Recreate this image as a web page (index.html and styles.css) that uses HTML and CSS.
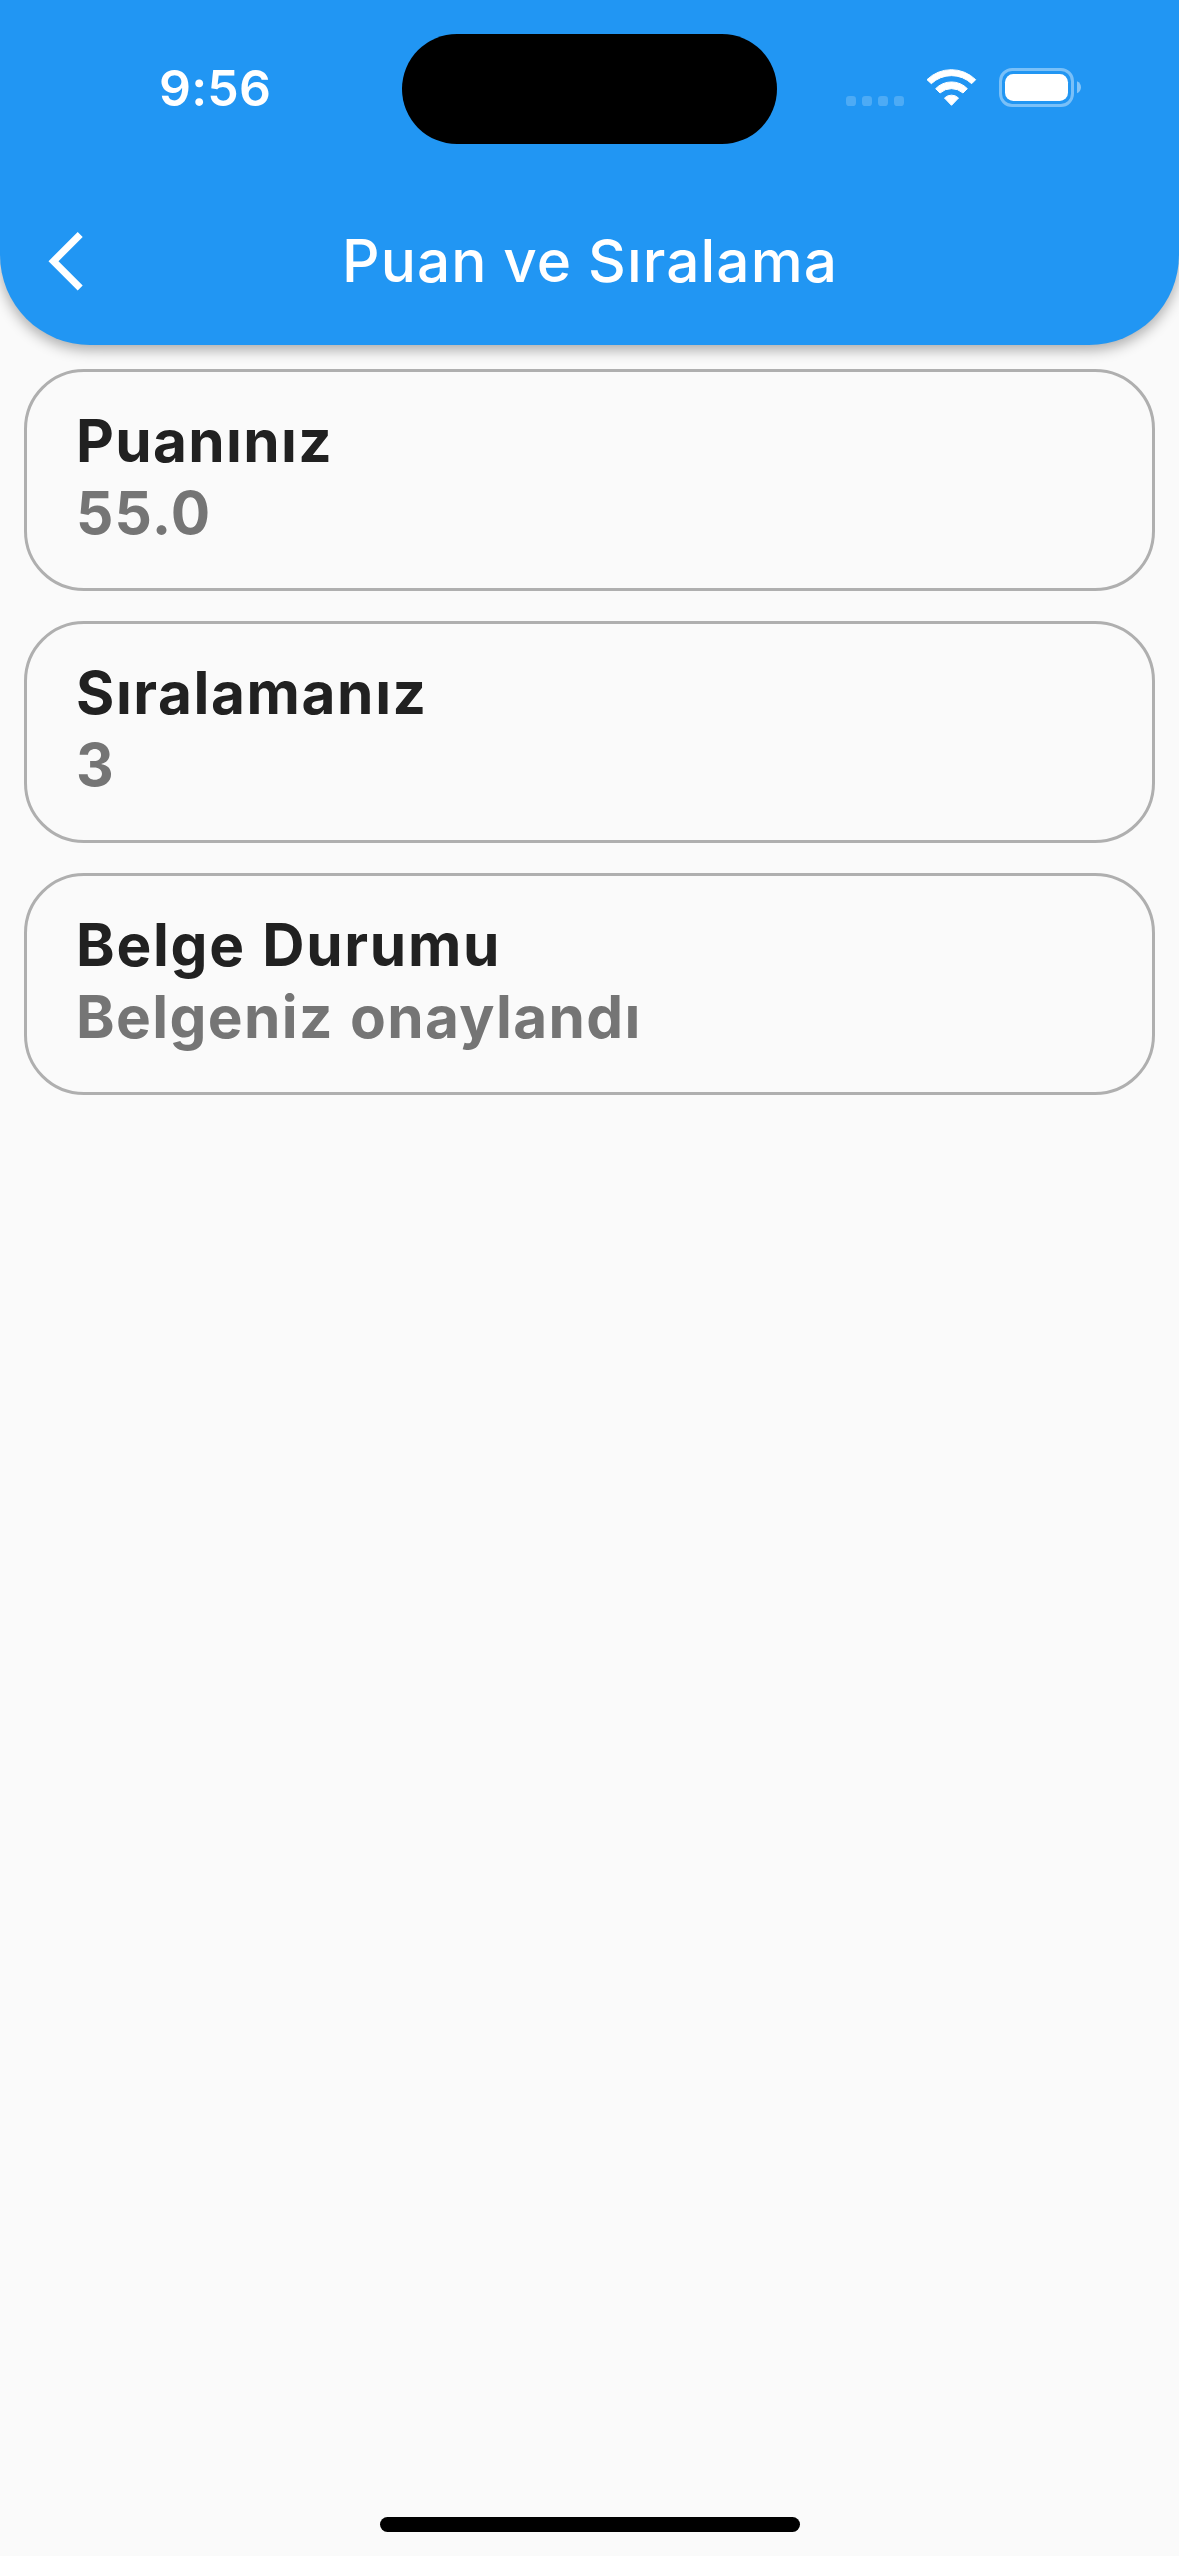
FILE: index.html
```html
<!DOCTYPE html>
<html lang="tr">
<head>
<meta charset="utf-8">
<title>Puan ve Sıralama</title>
<link rel="stylesheet" href="styles.css">
</head>
<body>
<div class="screen">
  <header class="app-bar">
    <div class="status-bar">
      <span class="time">9:56</span>
      <div class="island"></div>
      <svg class="status-icons" viewBox="78 84 705 117" aria-hidden="true">
        <g fill="#fff" fill-opacity=".2">
          <rect x="78" y="168" width="30" height="30" rx="10"/>
          <rect x="126" y="168" width="30" height="30" rx="10"/>
          <rect x="174" y="168" width="30" height="30" rx="10"/>
          <rect x="222" y="168" width="30" height="30" rx="10"/>
        </g>
        <g fill="#fff" stroke="#fff" stroke-width="3" stroke-linejoin="round">
          <path d="M321 119A104 104 0 0 1 467 119L455 131A88 88 0 0 0 334 131Z"/>
          <path d="M347 146A66 66 0 0 1 442 146L429 159A52 52 0 0 0 360 159Z"/>
          <path d="M373.500 174A30 30 0 0 1 415.500 174L394.500 196Z"/>
        </g>
        <rect x="541.500" y="88.500" width="216" height="108" rx="35" fill="none" stroke="#fff" stroke-opacity=".4" stroke-width="9"/>
        <rect x="555" y="102" width="189" height="81" rx="25" fill="#fff"/>
        <path d="M771 124C787 131 787 153 771 160Z" fill="#fff" fill-opacity=".45"/>
      </svg>
    </div>
    <div class="toolbar">
      <svg class="back" viewBox="0 0 36 60" aria-label="Geri"><path d="M34.700 6 29.700 1 .5 30.200 29.700 59.400 34.700 54.400 10.500 30.200Z" fill="#fff"/></svg>
      <h1 class="title">Puan ve Sıralama</h1>
    </div>
  </header>
  <main class="cards">
    <section class="card">
      <h2 class="label">Puanınız</h2>
      <p class="value value-score">55.0</p>
    </section>
    <section class="card">
      <h2 class="label label-rank">Sıralamanız</h2>
      <p class="value">3</p>
    </section>
    <section class="card">
      <h2 class="label label-document">Belge Durumu</h2>
      <p class="value">Belgeniz onaylandı</p>
    </section>
  </main>
  <div class="home-indicator"></div>
</div>
</body>
</html>
```
FILE: styles.css
```css
* { box-sizing: border-box; margin: 0; padding: 0; }

body {
  background: #fafafa;
  font-family: Inter, "Liberation Sans", sans-serif;
}

.screen {
  display: flex;
  flex-direction: column;
  width: 1179px;
  height: 2556px;
  background: #fafafa;
  overflow: hidden;
}

.app-bar {
  flex: none;
  height: 345px;
  background: #2196f3;
  color: #fff;
  border-radius: 0 0 90px 90px;
  box-shadow: 0 5px 14px rgba(0, 0, 0, .32);
}

.status-bar {
  position: relative;
  display: flex;
  align-items: flex-start;
  justify-content: space-between;
  height: 177px;
  padding: 58px 98px 0 159px;
}

.time {
  font-size: 50px;
  font-weight: 600;
  line-height: 60px;
  letter-spacing: .2px;
}

.island {
  position: absolute;
  top: 34px;
  left: 401.700px;
  width: 375.600px;
  height: 110px;
  border-radius: 55px;
  background: #000;
}

.status-icons {
  width: 235px;
  height: 39px;
  margin-top: 10px;
}

.toolbar {
  display: flex;
  align-items: center;
  height: 168px;
  padding-left: 48px;
}

.back {
  width: 36px;
  height: 60px;
}

.title {
  margin-left: 258px;
  font-size: 58.500px;
  font-weight: 500;
  line-height: 72px;
  letter-spacing: 1.100px;
  word-spacing: -1px;
  white-space: nowrap;
}

.cards {
  display: flex;
  flex: 1;
  flex-direction: column;
  gap: 30px;
  padding: 24px;
}

.card {
  height: 222px;
  padding: 33px 49px;
  border: 3px solid #afafaf;
  border-radius: 60px;
}

.label,
.value {
  font-size: 58.500px;
  font-weight: 700;
  line-height: 72px;
  letter-spacing: 1.350px;
  word-spacing: 1px;
}

.label { color: #212121; }
.label-rank { letter-spacing: 1.600px; }
.label-document { letter-spacing: 1.700px; }
.value { color: #757575; }
.value-score { letter-spacing: 1.200px; }

.home-indicator {
  flex: none;
  align-self: center;
  width: 420px;
  height: 15px;
  margin-bottom: 24px;
  border-radius: 8px;
  background: #000;
}
```
